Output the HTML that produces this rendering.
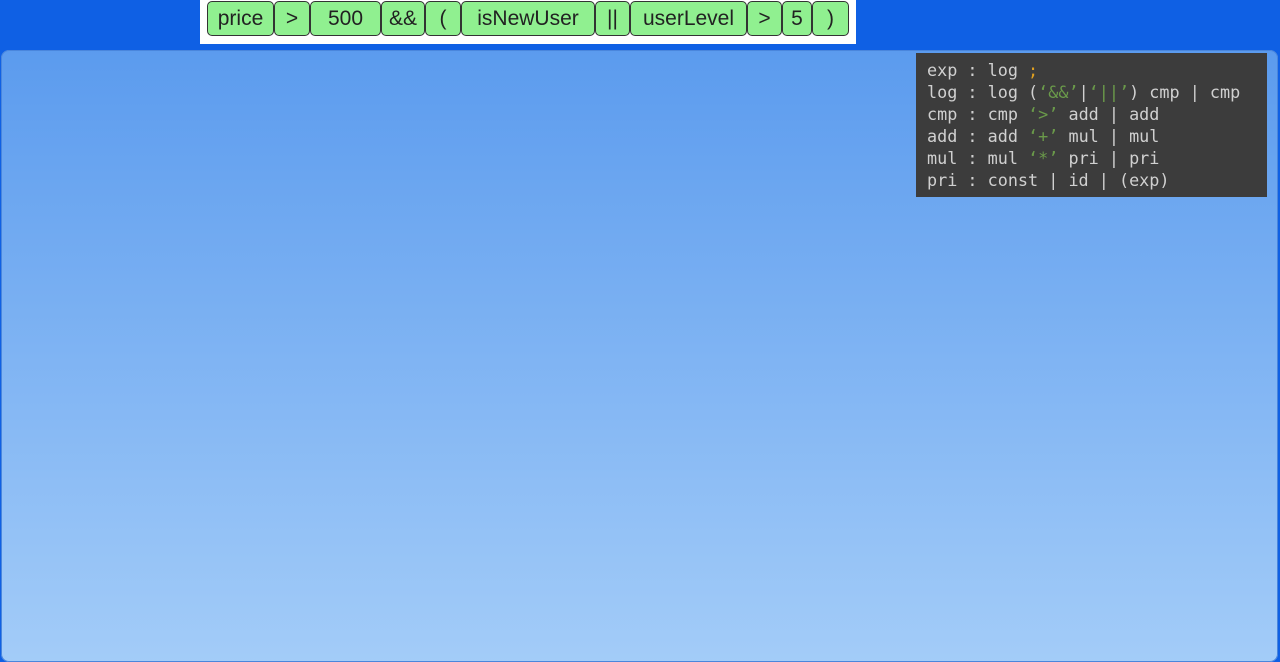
<!DOCTYPE html>
<html><head><meta charset="utf-8"><style>
html,body{margin:0;padding:0;width:1280px;height:660px;overflow:hidden;background:#0f60e4;font-family:"Liberation Sans",sans-serif}
.panel{position:absolute;left:1px;top:50px;width:1277px;height:612px;border-radius:8px;background:linear-gradient(#5b9bee,#a3ccf8);box-shadow:inset 0 0 0 1px #4a86dc}
.bar{position:absolute;left:200px;top:0;width:656px;height:44px;background:#fff}
.t{position:absolute;top:1px;height:33px;background:#90f090;border:1px solid #333;border-radius:5px;font-size:21px;line-height:34px;text-align:center;color:#222;box-sizing:content-box}
.code{position:absolute;left:916px;top:53px;width:351px;height:144px;background:#3c3c3c;color:#d0d0d0;font-family:"DejaVu Sans Mono","Liberation Mono",monospace;font-size:16.8px;line-height:22px;padding:6px 0 0 11px;box-sizing:border-box;white-space:pre}
.g{color:#6a9a4a}.o{color:#e0a020}
</style></head><body>
<div class="panel"></div>
<div class="bar"></div>
<div class="t" style="left:207px;width:65px">price</div>
<div class="t" style="left:274px;width:34px">&gt;</div>
<div class="t" style="left:310px;width:69px">500</div>
<div class="t" style="left:381px;width:42px">&amp;&amp;</div>
<div class="t" style="left:425px;width:34px">(</div>
<div class="t" style="left:461px;width:132px">isNewUser</div>
<div class="t" style="left:595px;width:33px">||</div>
<div class="t" style="left:630px;width:115px">userLevel</div>
<div class="t" style="left:747px;width:33px">&gt;</div>
<div class="t" style="left:782px;width:28px">5</div>
<div class="t" style="left:812px;width:35px">)</div>
<div class="code">exp : log <span class="o">;</span>
log : log (<span class="g">‘&amp;&amp;’</span>|<span class="g">‘||’</span>) cmp | cmp
cmp : cmp <span class="g">‘&gt;’</span> add | add
add : add <span class="g">‘+’</span> mul | mul
mul : mul <span class="g">‘*’</span> pri | pri
pri : const | id | (exp)</div>
</body></html>
